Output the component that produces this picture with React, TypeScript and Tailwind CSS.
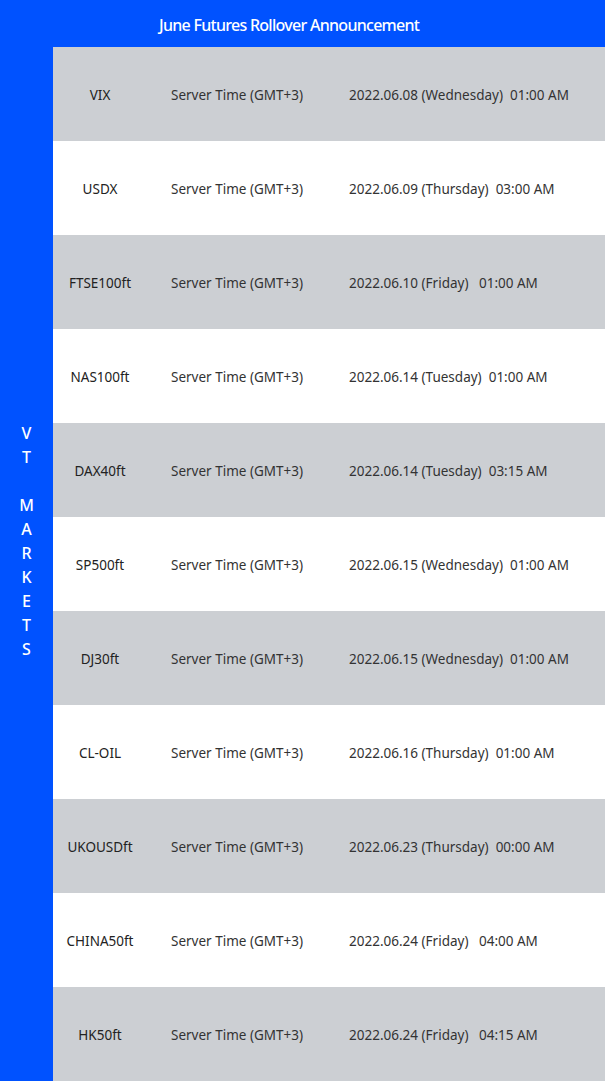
const rows = [
  { symbol: "VIX", date: "2022.06.08 (Wednesday)  01:00 AM" },
  { symbol: "USDX", date: "2022.06.09 (Thursday)  03:00 AM" },
  { symbol: "FTSE100ft", date: "2022.06.10 (Friday)   01:00 AM" },
  { symbol: "NAS100ft", date: "2022.06.14 (Tuesday)  01:00 AM" },
  { symbol: "DAX40ft", date: "2022.06.14 (Tuesday)  03:15 AM" },
  { symbol: "SP500ft", date: "2022.06.15 (Wednesday)  01:00 AM" },
  { symbol: "DJ30ft", date: "2022.06.15 (Wednesday)  01:00 AM" },
  { symbol: "CL-OIL", date: "2022.06.16 (Thursday)  01:00 AM" },
  { symbol: "UKOUSDft", date: "2022.06.23 (Thursday)  00:00 AM" },
  { symbol: "CHINA50ft", date: "2022.06.24 (Friday)   04:00 AM" },
  { symbol: "HK50ft", date: "2022.06.24 (Friday)   04:15 AM" },
]

const brand = "VT MARKETS".split("")

export default function App() {
  return (
    <div className="flex w-[605px] h-[1081px] bg-[#0052ff] font-['Noto_Sans',sans-serif]">
      {/* left brand strip */}
      <div className="w-[53px] h-full flex flex-col items-center justify-center text-white text-[16px] leading-[24px] font-medium">
        {brand.map((ch, i) => (
          <span key={i} className="h-[24px]">{ch === " " ? "\u00a0" : ch}</span>
        ))}
      </div>

      <div className="flex-1 flex flex-col">
        <div className="h-[47px] flex items-center pl-[106px] pt-[2px] text-white text-[16px] tracking-[-0.045em] font-medium leading-none">
          June Futures Rollover Announcement
        </div>
        {rows.map((r, i) => (
          <div
            key={r.symbol}
            className={`h-[94px] flex items-center pt-[2px] text-[13.5px] text-[#333] ${i % 2 === 0 ? "bg-[#cccfd3]" : "bg-white"}`}
          >
            <div className="w-[94px] text-center text-[#222]">{r.symbol}</div>
            <div className="w-[202px] pl-[24px]">Server Time (GMT+3)</div>
            <div className="whitespace-pre">{r.date}</div>
          </div>
        ))}
      </div>
    </div>
  )
}
